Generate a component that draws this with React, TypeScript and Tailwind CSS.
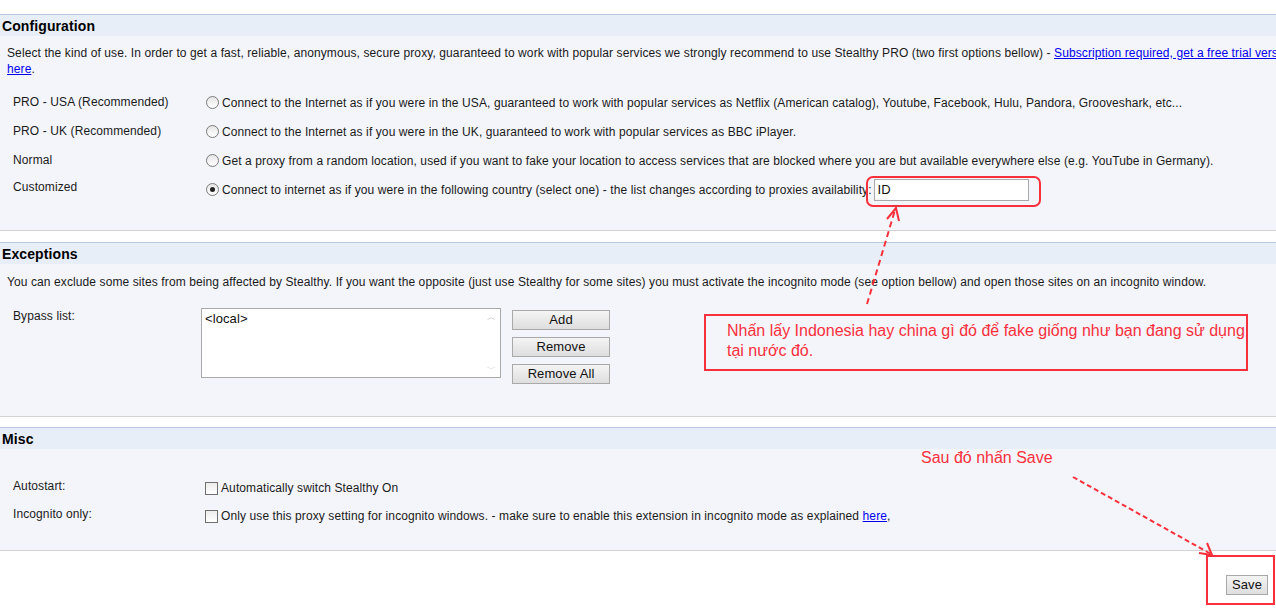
import React from "react";

const RED = "#f8303b";

function Radio({ checked }: { checked?: boolean }) {
  return (
    <span className="w-[13px] h-[13px] rounded-full border border-[#7a7a7a] bg-gradient-to-b from-[#e6e6e6] to-white flex items-center justify-center shrink-0 mr-[3px]">
      {checked && <span className="w-[5px] h-[5px] rounded-full bg-[#222]" />}
    </span>
  );
}

function Checkbox() {
  return <span className="w-[13px] h-[13px] border border-[#6f6f6f] bg-gradient-to-b from-[#ececec] to-white shrink-0 mr-[3px]" />;
}

function Btn({ children, className = "" }: { children: React.ReactNode; className?: string }) {
  return (
    <button className={`h-[20px] border border-[#a9a9a9] bg-gradient-to-b from-[#f4f4f4] to-[#dedede] text-[13px] leading-[18px] text-[#111] ${className}`}>
      {children}
    </button>
  );
}

function SectionHeader({ title }: { title: string }) {
  return (
    <div className="border-t border-[#b7c8e0] bg-[#e8eef8] h-[22px] px-[2px] font-bold text-[14px] leading-[22px] text-black">
      {title}
    </div>
  );
}

export default function App() {
  const proxyRows = [
    { label: "PRO - USA (Recommended)", text: "Connect to the Internet as if you were in the USA, guaranteed to work with popular services as Netflix (American catalog), Youtube, Facebook, Hulu, Pandora, Grooveshark, etc..." },
    { label: "PRO - UK (Recommended)", text: "Connect to the Internet as if you were in the UK, guaranteed to work with popular services as BBC iPlayer." },
    { label: "Normal", text: "Get a proxy from a random location, used if you want to fake your location to access services that are blocked where you are but available everywhere else (e.g. YouTube in Germany)." },
  ];

  return (
    <div className="relative w-[1276px] h-[610px] overflow-hidden bg-white text-[12px] tracking-[0.1px] text-[#1a1a1a] font-['Liberation_Sans',Arial,sans-serif]">
      <div className="h-[14px]" />

      {/* Configuration */}
      <SectionHeader title="Configuration" />
      <div className="bg-[#f4f5fb] border-b border-[#d3d3d3] h-[195px] pt-[9px] pl-[7px] whitespace-nowrap">
        <div className="leading-[16px]">
          Select the kind of use. In order to get a fast, reliable, anonymous, secure proxy, guaranteed to work with popular services we strongly recommend to use Stealthy PRO (two first options bellow) -{" "}
          <a className="text-[#0000ee] underline">Subscription required, get a free trial version</a>
        </div>
        <div className="leading-[16px]">
          <a className="text-[#0000ee] underline">here</a>.
        </div>
        <div className="mt-[11px] pl-[6px]">
          {proxyRows.map((r) => (
            <div key={r.label} className="flex items-center h-[29px]">
              <span className="w-[193px] -mt-[2px]">{r.label}</span>
              <Radio />
              <span>{r.text}</span>
            </div>
          ))}
          <div className="flex items-center h-[29px]">
            <span className="w-[193px] -mt-[5px]">Customized</span>
            <Radio checked />
            <span>Connect to internet as if you were in the following country (select one) - the list changes according to proxies availability:</span>
            <div className="ml-[2px] w-[155px] h-[22px] border border-[#a9a9a9] bg-white text-[13px] leading-[20px] pl-[3px] text-[#111]">ID</div>
          </div>
        </div>
      </div>

      <div className="h-[11px]" />

      {/* Exceptions */}
      <SectionHeader title="Exceptions" />
      <div className="bg-[#f4f5fb] border-b border-[#d3d3d3] h-[153px] pt-[10px] pl-[7px] whitespace-nowrap">
        <div className="leading-[16px]">
          You can exclude some sites from being affected by Stealthy. If you want the opposite (just use Stealthy for some sites) you must activate the incognito mode (see option bellow) and open those sites on an incognito window.
        </div>
        <div className="flex mt-[18px] pl-[6px]">
          <span className="w-[188px] -mt-[1px]">Bypass list:</span>
          <div className="w-[300px] h-[70px] border border-[#a9a9a9] bg-white flex">
            <div className="flex-1 pl-[3px] pt-[2px] text-[13px] leading-[15px] text-[#111]">&lt;local&gt;</div>
            <div className="w-[17px] flex flex-col justify-between items-center py-[2px] text-[#b9b9b9] text-[9px] leading-[12px]">
              <span>︿</span>
              <span>﹀</span>
            </div>
          </div>
          <div className="ml-[11px] mt-[2px] flex flex-col gap-[7px]">
            <Btn className="w-[98px]">Add</Btn>
            <Btn className="w-[98px]">Remove</Btn>
            <Btn className="w-[98px]">Remove All</Btn>
          </div>
        </div>
      </div>

      <div className="h-[10px]" />

      {/* Misc */}
      <SectionHeader title="Misc" />
      <div className="bg-[#f4f5fb] border-b border-[#d3d3d3] h-[102px] pt-[25px] pl-[13px] whitespace-nowrap">
        <div className="flex items-center h-[28px]">
          <span className="w-[192px] -mt-[4px]">Autostart:</span>
          <Checkbox />
          <span>Automatically switch Stealthy On</span>
        </div>
        <div className="flex items-center h-[28px]">
          <span className="w-[192px] -mt-[4px]">Incognito only:</span>
          <Checkbox />
          <span>
            Only use this proxy setting for incognito windows. - make sure to enable this extension in incognito mode as explained{" "}
            <a className="text-[#0000ee] underline">here</a>,
          </span>
        </div>
      </div>

      <div className="flex justify-end pr-[8px] pt-[24px]">
        <Btn className="w-[42px] h-[20px]">Save</Btn>
      </div>

      {/* Annotations */}
      <div className="absolute left-[866px] top-[176px] w-[175px] h-[31px] border-2 border-[#f8303b] rounded-[7px]" />
      <div className="absolute left-[704px] top-[314px] w-[544px] h-[57px] border-2 border-[#f8303b] pl-[21px] pt-[5px] text-[16px] leading-[20px] tracking-normal text-[#f8303b]">
        Nhấn lấy Indonesia hay china gì đó để fake giống như bạn đang sử dụng
        <br />
        tại nước đó.
      </div>
      <div className="absolute left-[921px] top-[448px] text-[16px] leading-[20px] tracking-normal text-[#f8303b]">Sau đó nhấn Save</div>
      <div className="absolute left-[1206px] top-[555px] w-[69px] h-[50px] border-2 border-[#f8303b]" />

      <svg className="absolute left-0 top-0 pointer-events-none" width="1276" height="610">
        <g stroke={RED} strokeWidth="2" fill="none">
          <line x1="867" y1="304" x2="895" y2="210" strokeDasharray="6 4" />
          <polyline points="887,219 896,208 899,221" />
          <line x1="1073" y1="477" x2="1211" y2="554" strokeDasharray="5 3" />
          <polyline points="1199,553 1212,555 1207,543" />
        </g>
      </svg>
    </div>
  );
}
